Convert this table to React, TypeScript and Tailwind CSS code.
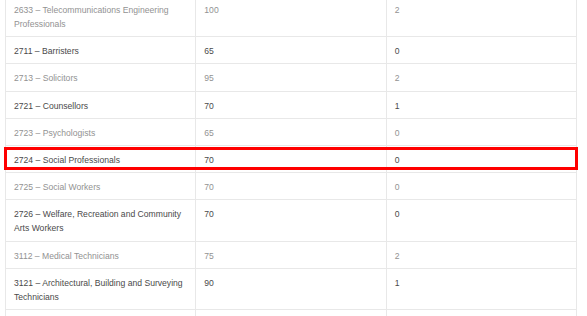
import React from "react";

const rows: { name: string[]; a: string; b: string; dark: boolean }[] = [
  { name: ["2633 – Telecommunications Engineering", "Professionals"], a: "100", b: "2", dark: false },
  { name: ["2711 – Barristers"], a: "65", b: "0", dark: true },
  { name: ["2713 – Solicitors"], a: "95", b: "2", dark: false },
  { name: ["2721 – Counsellors"], a: "70", b: "1", dark: true },
  { name: ["2723 – Psychologists"], a: "65", b: "0", dark: false },
  { name: ["2724 – Social Professionals"], a: "70", b: "0", dark: true },
  { name: ["2725 – Social Workers"], a: "70", b: "0", dark: false },
  { name: ["2726 – Welfare, Recreation and Community", "Arts Workers"], a: "70", b: "0", dark: true },
  { name: ["3112 – Medical Technicians"], a: "75", b: "2", dark: false },
  { name: ["3121 – Architectural, Building and Surveying", "Technicians"], a: "90", b: "1", dark: true },
  { name: ["\u00a0"], a: "\u00a0", b: "\u00a0", dark: false },
];

export default function App() {
  return (
    <div
      className="relative w-[587px] h-[316px] overflow-hidden bg-white"
      style={{ fontFamily: '"Liberation Sans", Arial, sans-serif' }}
    >
      <div className="-mt-[5px] ml-[5px] w-[572px]">
        <table className="w-full table-fixed border-collapse text-[8.6px] leading-[14px]">
          <tbody>
            {rows.map((r, i) => (
              <tr key={i} className={r.dark ? "text-[#4a4a4a]" : "text-[#929292]"}>
                <td className="border border-[#e8e8e8] align-top pl-[8px] pr-2 pt-[7px] pb-[5.2px]">
                  {r.name.map((l, j) => (
                    <div key={j} className="whitespace-nowrap">{l}</div>
                  ))}
                </td>
                <td className="border border-[#e8e8e8] align-top pl-[8px] pt-[7px] pb-[5.2px]">{r.a}</td>
                <td className="border border-[#e8e8e8] align-top pl-[8px] pt-[7px] pb-[5.2px]">{r.b}</td>
              </tr>
            ))}
          </tbody>
        </table>
      </div>
      <div className="absolute left-[4px] top-[147px] w-[574px] h-[23px] border-[3px] border-[#ff0000]" />
    </div>
  );
}
